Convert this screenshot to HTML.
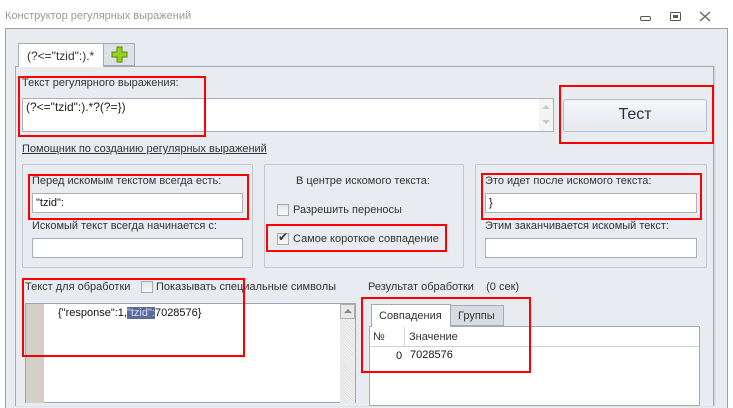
<!DOCTYPE html>
<html><head><meta charset="utf-8"><style>
*{box-sizing:border-box;margin:0;padding:0}
body{width:733px;height:403px;overflow:hidden;background:#fff;font-family:"Liberation Sans","DejaVu Sans",sans-serif;font-size:11px;color:#222;position:relative}
.a{position:absolute}
.red{position:absolute;border:2px solid #f00}
.inp{position:absolute;background:#fff;border:1px solid #a9b0ba}
.grp{position:absolute;border:1px solid #c3c8cf;border-radius:2px}
.t{position:absolute;white-space:nowrap;color:#333}
.cb{position:absolute;width:12px;height:12px;border:1px solid #a9adb3;background:linear-gradient(#e4e4e4,#fafafa)}
</style></head><body>
<div class="t" style="left:5px;top:10px;color:#999;font-size:11px">Конструктор регулярных выражений</div>
<svg class="a" style="left:640px;top:9px" width="90" height="14">
<rect x="0.5" y="7.5" width="10" height="4" rx="1.5" fill="none" stroke="#555"/>
<rect x="30.5" y="3.5" width="10" height="8" rx="1" fill="none" stroke="#555"/><rect x="33" y="6" width="5" height="3" fill="#555"/>
<path d="M60 3 L70 12 M70 3 L60 12" stroke="#666" stroke-width="1.3"/>
</svg>
<div class="a" style="left:5px;top:28px;width:723px;height:380px;background:#e8ebf0;border:1px solid #9aa0a8;border-bottom:none"></div>
<div class="a" style="left:15px;top:66px;width:699px;height:340px;background:#e8ebf0;border:1px solid #a5abb3;border-bottom:none;box-shadow:1px 0 1px #c8ccd2"></div>
<div class="a" style="left:18px;top:43px;width:86px;height:24px;background:#fff;border:1px solid #a5abb3;border-bottom:none"></div>
<div class="t" style="left:27px;top:49px;font-size:12px">(?&lt;="tzid":).*</div>
<div class="a" style="left:104px;top:43px;width:31px;height:23px;background:#dde0e4;border:1px solid #a5abb3;border-left:none"></div>
<svg class="a" style="left:111px;top:46px" width="17" height="17"><path d="M6 1h5v5h5v5h-5v5H6v-5H1V6h5z" fill="#9ad01c" stroke="#5b8a0c"/></svg>
<div class="t" style="left:22px;top:77px">Текст регулярного выражения:</div>
<div class="inp" style="left:22px;top:98px;width:532px;height:34px"></div>
<div class="a" style="left:539px;top:99px;width:14px;height:32px;background:#f4f4f4"></div>
<svg class="a" style="left:540px;top:103px" width="12" height="24"><path d="M2 6L6 2L10 6Z M2 17L6 21L10 17Z" fill="#c8c8c8"/></svg>
<div class="t" style="left:26px;top:100px;font-size:12px;color:#222">(?&lt;="tzid":).*?(?=})</div>
<div class="a" style="left:563px;top:99px;width:144px;height:33px;border:1px solid #b8bec6;border-radius:3px;background:linear-gradient(#f4f6f9,#e6e9ee)"></div>
<div class="t" style="left:563px;top:106px;width:144px;text-align:center;font-size:16px;color:#2a2f45">Тест</div>
<div class="red" style="left:18px;top:76px;width:188px;height:61px"></div>
<div class="red" style="left:559px;top:85px;width:155px;height:59px"></div>
<div class="t" style="left:22px;top:143px;text-decoration:underline;color:#333">Помощник по созданию регулярных выражений</div>

<div class="grp" style="left:22px;top:164px;width:231px;height:104px"></div>
<div class="grp" style="left:264px;top:164px;width:200px;height:104px"></div>
<div class="grp" style="left:475px;top:164px;width:232px;height:104px"></div>
<div class="t" style="left:32px;top:175px">Перед искомым текстом всегда есть:</div>
<div class="inp" style="left:32px;top:193px;width:211px;height:20px"></div>
<div class="t" style="left:36px;top:197px;color:#111">"tzid":</div>
<div class="t" style="left:32px;top:220px">Искомый текст всегда начинается с:</div>
<div class="inp" style="left:32px;top:238px;width:211px;height:20px"></div>
<div class="t" style="left:296px;top:175px">В центре искомого текста:</div>
<div class="cb" style="left:277px;top:204px"></div>
<div class="t" style="left:293px;top:204px">Разрешить переносы</div>
<div class="cb" style="left:277px;top:233px"></div>
<div class="t" style="left:278px;top:230px;font-size:12px;color:#333">✔</div>
<div class="t" style="left:293px;top:233px">Самое короткое совпадение</div>
<div class="t" style="left:485px;top:175px">Это идет после искомого текста:</div>
<div class="inp" style="left:485px;top:193px;width:212px;height:20px"></div>
<div class="t" style="left:489px;top:197px;color:#111">}</div>
<div class="t" style="left:485px;top:220px">Этим заканчивается искомый текст:</div>
<div class="inp" style="left:485px;top:238px;width:212px;height:20px"></div>
<div class="red" style="left:28px;top:174px;width:221px;height:46px"></div>
<div class="red" style="left:266px;top:224px;width:181px;height:28px"></div>
<div class="red" style="left:481px;top:173px;width:221px;height:47px"></div>

<div class="t" style="left:25px;top:281px">Текст для обработки</div>
<div class="cb" style="left:141px;top:281px"></div>
<div class="t" style="left:156px;top:281px">Показывать специальные символы</div>
<div class="a" style="left:25px;top:303px;width:331px;height:100px;background:#fff;border:1px solid #a0a6ae"></div>
<div class="a" style="left:26px;top:304px;width:18px;height:99px;background:#d4d0c8"></div>
<div class="a" style="left:340px;top:304px;width:15px;height:99px;background:repeating-linear-gradient(45deg,#e0e0e0 0 1px,#f4f4f4 1px 2px)"></div>
<div class="a" style="left:340px;top:304px;width:15px;height:15px;background:#e8e8e8;border:1px solid #b0b0b0"></div>
<svg class="a" style="left:343px;top:308px" width="10" height="6"><path d="M1 5L5 1L9 5Z" fill="#888"/></svg>
<div class="t" style="left:58px;top:307px;color:#111">{"response":1,<span style="background:#5a6a9a;color:#dde">"tzid":</span>7028576}</div>
<div class="red" style="left:22px;top:278px;width:223px;height:79px"></div>

<div class="t" style="left:368px;top:281px">Результат обработки&nbsp;&nbsp;&nbsp;&nbsp;(0 сек)</div>
<div class="a" style="left:369px;top:326px;width:331px;height:80px;background:#fff;border:1px solid #a5abb3"></div>
<div class="a" style="left:370px;top:327px;width:329px;height:20px;border-bottom:1px solid #d0d4da"></div>
<div class="a" style="left:404px;top:327px;width:1px;height:20px;background:#d0d4da"></div>
<div class="t" style="left:373px;top:331px">№</div>
<div class="t" style="left:409px;top:331px">Значение</div>
<div class="t" style="left:396px;top:350px;color:#111">0</div>
<div class="t" style="left:410px;top:349px;color:#111">7028576</div>
<div class="a" style="left:371px;top:304px;width:80px;height:23px;background:#fff;border:1px solid #a5abb3;border-bottom:none"></div>
<div class="t" style="left:379px;top:310px">Совпадения</div>
<div class="a" style="left:451px;top:305px;width:53px;height:21px;background:#d8dbe0;border:1px solid #a5abb3;border-left:none"></div>
<div class="t" style="left:458px;top:310px">Группы</div>
<div class="red" style="left:361px;top:297px;width:170px;height:76px"></div>
</body></html>
